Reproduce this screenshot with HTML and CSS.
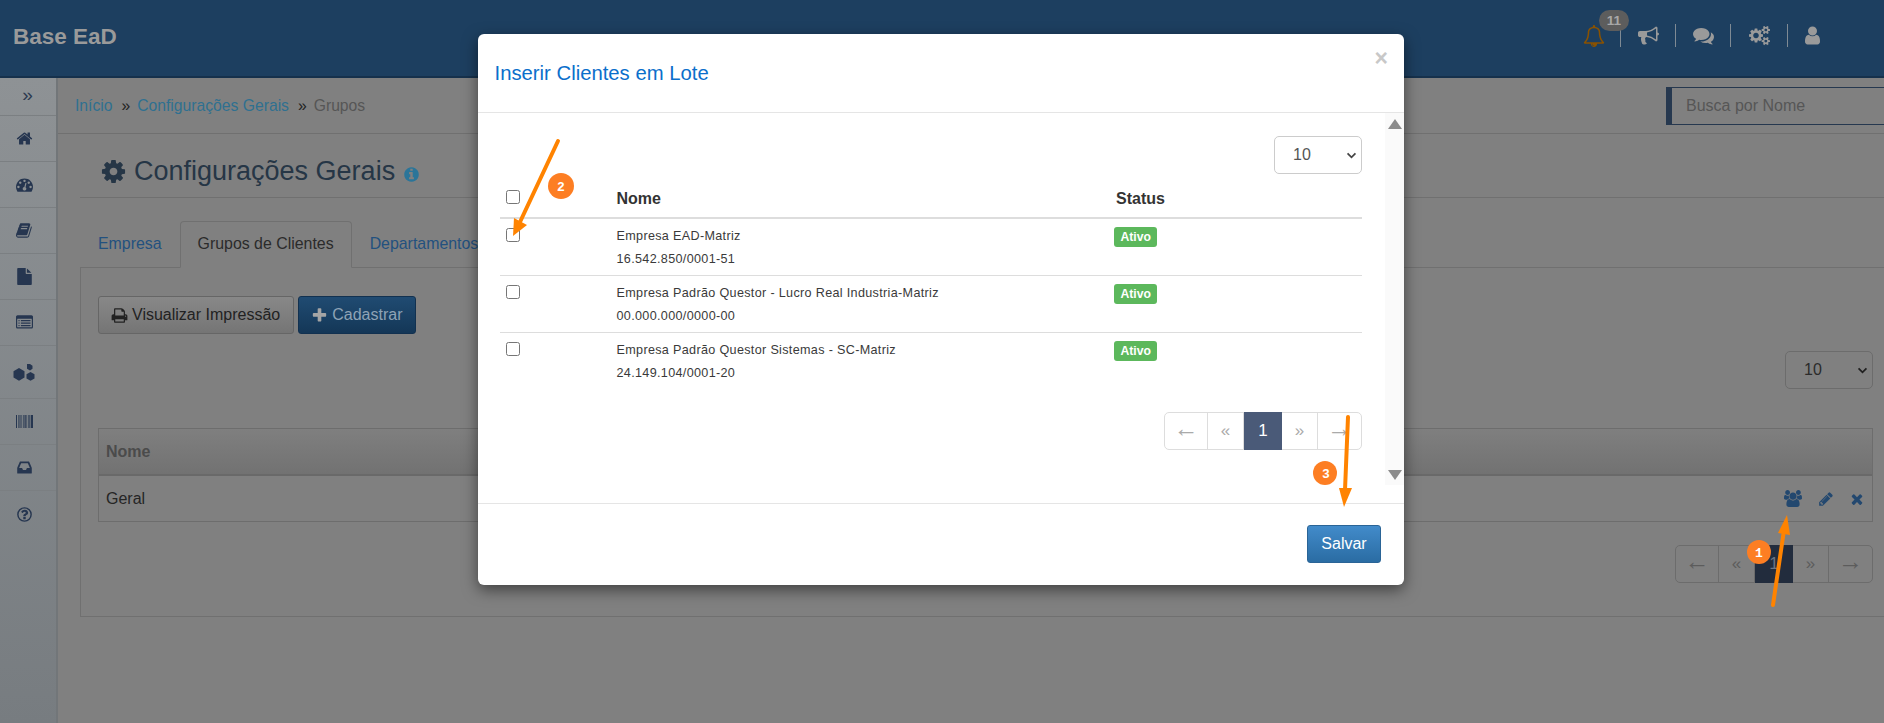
FILE: index.html
```html
<!DOCTYPE html>
<html lang="pt-BR">
<head>
<meta charset="utf-8">
<title>Grupos</title>
<link rel="stylesheet" href="styles.css">
</head>
<body>
<svg class="sprite" aria-hidden="true">
<symbol id="i-cog" viewBox="0 0 1792 1792"><path d="M1152 896q0-106-75-181t-181-75-181 75-75 181 75 181 181 75 181-75 75-181zm512-109v222q0 12-8 23t-20 13l-185 28q-19 54-39 91 35 50 107 138 10 12 10 25t-9 23q-27 37-99 108t-94 71q-12 0-26-9l-138-108q-44 23-91 38-16 136-29 186-7 28-36 28h-222q-14 0-24.5-8.5t-11.5-21.5l-28-184q-49-16-90-37l-141 107q-10 9-25 9-14 0-25-11-126-114-165-168-7-10-7-23 0-12 8-23 15-21 51-66.5t54-70.5q-27-50-41-99l-183-27q-13-2-21-12.5t-8-23.5v-222q0-12 8-23t19-13l186-28q14-46 39-92-40-57-107-138-10-12-10-24 0-10 9-23 26-36 98.5-107.5t94.5-71.5q13 0 26 10l138 107q44-23 91-38 16-136 29-186 7-28 36-28h222q14 0 24.5 8.5t11.5 21.5l28 184q49 16 90 37l142-107q9-9 24-9 13 0 25 10 129 119 165 170 7 8 7 22 0 12-8 23-15 21-51 66.5t-54 70.5q26 50 41 98l183 28q13 2 21 12.5t8 23.5z"/></symbol>
<symbol id="i-times" viewBox="0 0 1792 1792"><path d="M1490 1322q0 40-28 68l-136 136q-28 28-68 28t-68-28l-294-294-294 294q-28 28-68 28t-68-28l-136-136q-28-28-28-68t28-68l294-294-294-294q-28-28-28-68t28-68l136-136q28-28 68-28t68 28l294 294 294-294q28-28 68-28t68 28l136 136q28 28 28 68t-28 68l-294 294 294 294q28 28 28 68z"/></symbol>
<symbol id="i-plus" viewBox="0 0 1792 1792"><path d="M1600 736v192q0 40-28 68t-68 28h-416v416q0 40-28 68t-68 28h-192q-40 0-68-28t-28-68v-416h-416q-40 0-68-28t-28-68v-192q0-40 28-68t68-28h416v-416q0-40 28-68t68-28h192q40 0 68 28t28 68v416h416q40 0 68 28t28 68z"/></symbol>
<symbol id="i-user" viewBox="0 0 1792 1792"><path d="M1536 1399q0 109-62.5 187t-150.5 78h-854q-88 0-150.5-78t-62.5-187q0-85 8.5-160.5t31.5-152 58.5-131 94-89 134.5-34.5q131 128 313 128t313-128q76 0 134.5 34.5t94 89 58.5 131 31.5 152 8.5 160.5zm-256-887q0 159-112.5 271.5t-271.5 112.5-271.5-112.5-112.5-271.5 112.5-271.5 271.5-112.5 271.5 112.5 112.5 271.5z"/></symbol>
<symbol id="i-home" viewBox="0 0 1792 1792"><path d="M1472 992v480q0 26-19 45t-45 19h-384v-384h-256v384h-384q-26 0-45-19t-19-45v-480q0-1 .5-3t.5-3l575-474 575 474q1 2 1 6zm223-69l-62 74q-8 9-21 11h-3q-13 0-21-7l-692-577-692 577q-12 8-24 7-13-2-21-11l-62-74q-8-10-7-23.5t11-21.5l719-599q32-26 76-26t76 26l244 204v-195q0-14 9-23t23-9h192q14 0 23 9t9 23v408l219 182q10 8 11 21.5t-7 23.5z"/></symbol>
<symbol id="i-file" viewBox="0 0 1792 1792"><path d="M1152 512v-472q22 14 36 28l408 408q14 14 28 36h-472zm-128 32q0 40 28 68t68 28h544v1056q0 40-28 68t-68 28h-1344q-40 0-68-28t-28-68v-1600q0-40 28-68t68-28h800v544z"/></symbol>
<symbol id="i-pencil" viewBox="0 0 1792 1792"><path d="M491 1536l91-91-235-235-91 91v107h128v128h107zm523-928q0-22-22-22-10 0-17 7l-542 542q-7 7-7 17 0 22 22 22 10 0 17-7l542-542q7-7 7-17zm-54-192l416 416-832 832h-416v-416zm683 96q0 53-37 90l-166 166-416-416 166-165q36-38 90-38 53 0 91 38l235 234q37 39 37 91z"/></symbol>
<symbol id="i-users" viewBox="0 0 1920 1792"><path d="M593 896q-162 5-265 128h-134q-82 0-138-40.5t-56-118.5q0-353 124-353 6 0 43.5 21t97.5 42.5 119 21.5q67 0 133-23-5 37-5 66 0 139 81 256zm1071 637q0 120-73 189.5t-194 69.5h-874q-121 0-194-69.5t-73-189.5q0-53 3.5-103.5t14-109 26.5-108.5 43-97.5 62-81 85.5-53.5 111.5-20q10 0 43 21.5t73 48 107 48 135 21.5 135-21.5 107-48 73-48 43-21.5q61 0 111.5 20t85.5 53.5 62 81 43 97.5 26.5 108.5 14 109 3.5 103.5zm-1024-1277q0 106-75 181t-181 75-181-75-75-181 75-181 181-75 181 75 75 181zm704 384q0 159-112.5 271.5t-271.5 112.5-271.5-112.5-112.5-271.5 112.5-271.5 271.5-112.5 271.5 112.5 112.5 271.5zm576 225q0 78-56 118.5t-138 40.5h-134q-103-123-265-128 81-117 81-256 0-29-5-66 66 23 133 23 59 0 119-21.5t97.5-42.5 43.5-21q124 0 124 353zm-128-609q0 106-75 181t-181 75-181-75-75-181 75-181 181-75 181 75 75 181z"/></symbol>
<symbol id="i-info" viewBox="0 0 1792 1792"><path d="M1152 1376v-160q0-14-9-23t-23-9h-96v-512q0-14-9-23t-23-9h-320q-14 0-23 9t-9 23v160q0 14 9 23t23 9h96v320h-96q-14 0-23 9t-9 23v160q0 14 9 23t23 9h448q14 0 23-9t9-23zm-128-896v-160q0-14-9-23t-23-9h-192q-14 0-23 9t-9 23v160q0 14 9 23t23 9h192q14 0 23-9t9-23zm640 416q0 209-103 385.5t-279.5 279.5-385.5 103-385.5-103-279.5-279.5-103-385.5 103-385.5 279.5-279.5 385.5-103 385.5 103 279.5 279.5 103 385.5z"/></symbol>
<symbol id="i-print" viewBox="0 0 1792 1792"><path d="M448 1536h896v-256h-896v256zm0-640h896v-384h-160q-40 0-68-28t-28-68v-160h-640v640zm1152 64q0-26-19-45t-45-19-45 19-19 45 19 45 45 19 45-19 19-45zm128 0v416q0 13-9.5 22.5t-22.5 9.5h-224v160q0 40-28 68t-68 28h-960q-40 0-68-28t-28-68v-160h-224q-13 0-22.5-9.5t-9.5-22.5v-416q0-79 56.5-135.5t135.5-56.5h64v-544q0-40 28-68t68-28h672q40 0 88 20t76 48l152 152q28 28 48 76t20 88v256h64q79 0 135.5 56.5t56.5 135.5z"/></symbol>
<symbol id="i-comments" viewBox="0 0 1792 1792"><path d="M1408 768q0 139-94 257t-256.5 186.5-353.5 68.5q-86 0-176-16-124 88-278 128-36 9-86 16h-3q-11 0-20.5-8t-11.5-21q-1-3-1-6.5t.5-6.5 2-6l2.5-5 3.5-5.5 4-5 4.5-5 4-4.5q5-6 23-25t26-29.5 22.5-29 25-38.5 20.5-44q-124-72-195-177t-71-224q0-139 94-257t256.5-186.5 353.5-68.5 353.5 68.5 256.5 186.5 94 257zm384 256q0 120-71 224.5t-195 176.5q10 24 20.5 44t25 38.5 22.5 29 26 29.5 23 25q1 1 4 4.5t4.5 5 4 5 3.5 5.5l2.5 5 2 6 .5 6.5-1 6.5q-3 14-13 22t-22 7q-50-7-86-16-154-40-278-128-90 16-176 16-271 0-472-132 58 4 88 4 161 0 309-45t264-129q125-92 192-212t67-254q0-77-23-152 129 71 204 178t75 230z"/></symbol>
<symbol id="i-bell" viewBox="0 0 1792 1792"><path d="M912 1696q0-16-16-16-59 0-101.5-42.5t-42.5-101.5q0-16-16-16t-16 16q0 73 51.5 124.5t124.5 51.5q16 0 16-16zm-666-288h1300q-266-300-266-832 0-51-24-105t-69-103-121.5-80.5-169.5-31.5-169.5 31.5-121.5 80.5-69 103-24 105q0 532-266 832zm1482 0q0 52-38 90t-90 38h-448q0 106-75 181t-181 75-181-75-75-181h-448q-52 0-90-38t-38-90q50-42 91-88t85-119.5 74.5-158.5 50-206 19.5-260q0-152 117-282.5t307-158.5q-8-19-8-39 0-40 28-68t68-28 68 28 28 68q0 20-8 39 190 28 307 158.5t117 282.5q0 139 19.5 260t50 206 74.5 158.5 85 119.5 91 88z"/></symbol>
<symbol id="i-bullhorn" viewBox="0 0 1792 1792"><path d="M1664 640q53 0 90.5 37.5t37.5 90.5-37.5 90.5-90.5 37.5v384q0 52-38 90t-90 38q-417-347-812-380-58 19-91 66t-31 100.5 40 92.5q-20 33-23 65.5t6 58 33.5 55 48 50 61.5 50.5q-29 58-111.5 83t-168.5 11.5-132-55.5q-7-23-29.5-87.5t-32-94.5-23-89-15-101 3.5-98.5 22-110.5h-122q-66 0-113-47t-47-113v-192q0-66 47-113t113-47h480q435 0 896-384 52 0 90 38t38 90v384zm-128 604v-954q-394 302-768 343v270q377 42 768 341z"/></symbol>
<symbol id="i-cogs" viewBox="0 0 1920 1792"><path d="M896 896q0-106-75-181t-181-75-181 75-75 181 75 181 181 75 181-75 75-181zm768 512q0-52-38-90t-90-38-90 38-38 90q0 53 37.5 90.5t90.5 37.5 90.5-37.5 37.5-90.5zm0-1024q0-52-38-90t-90-38-90 38-38 90q0 53 37.5 90.5t90.5 37.5 90.5-37.5 37.5-90.5zm-384 421v185q0 10-7 19.5t-16 10.5l-155 24q-11 35-32 76 34 48 90 115 7 11 7 20 0 12-7 19-23 30-82.5 89.5t-78.5 59.5q-11 0-21-7l-115-90q-37 19-77 31-11 108-23 155-7 24-30 24h-186q-11 0-20-7.5t-10-17.5l-23-153q-34-10-75-31l-118 89q-7 7-20 7-11 0-21-8-144-133-144-160 0-9 7-19 10-14 41-53t47-61q-23-44-35-82l-152-24q-10-1-17-9.5t-7-19.5v-185q0-10 7-19.5t16-10.5l155-24q11-35 32-76-34-48-90-115-7-11-7-19 0-12 7-20 22-30 82-89t79-59q11 0 21 7l115 90q34-18 77-32 11-108 23-154 7-24 30-24h186q11 0 20 7.5t10 17.5l23 153q34 10 75 31l118-89q8-7 20-7 11 0 21 8 144 133 144 160 0 8-7 19-12 16-42 54t-45 60q23 48 34 82l152 23q10 2 17 10.5t7 19.5zm640 533v140q0 16-149 31-12 27-30 52 51 113 51 138 0 4-4 7-122 71-124 71-8 0-46-47t-52-68q-20 2-30 2t-30-2q-14 21-52 68t-46 47q-2 0-124-71-4-3-4-7 0-25 51-138-18-25-30-52-149-15-149-31v-140q0-16 149-31 13-29 30-52-51-113-51-138 0-4 4-7 4-2 35-20t59-34 30-16q8 0 46 46.5t52 67.5q20-2 30-2t30 2q51-71 92-112l6-2q4 0 124 70 4 3 4 7 0 25-51 138 17 23 30 52 149 15 149 31zm0-1024v140q0 16-149 31-12 27-30 52 51 113 51 138 0 4-4 7-122 71-124 71-8 0-46-47t-52-68q-20 2-30 2t-30-2q-14 21-52 68t-46 47q-2 0-124-71-4-3-4-7 0-25 51-138-18-25-30-52-149-15-149-31v-140q0-16 149-31 13-29 30-52-51-113-51-138 0-4 4-7 4-2 35-20t59-34 30-16q8 0 46 46.5t52 67.5q20-2 30-2t30 2q51-71 92-112l6-2q4 0 124 70 4 3 4 7 0 25-51 138 17 23 30 52 149 15 149 31z"/></symbol>
<symbol id="i-book" viewBox="0 0 1792 1792"><path d="M1639 478q40 57 18 129l-275 906q-19 64-76.5 107.5t-122.5 43.5h-923q-77 0-148.5-53.5t-99.5-131.5q-24-67-2-127 0-4 3-27t4-37q1-8-3-21.5t-3-19.5q2-11 8-21t16.5-23.5 16.5-23.5q23-38 45-91.5t30-91.5q3-10 .5-30t-.5-28q3-11 17-28t17-23q21-36 42-92t25-90q1-9-2.5-32t.5-28q4-13 22-30.5t22-22.5q19-26 42.5-84.5t27.5-96.5q1-8-3-25.5t-2-26.5q2-8 9-18t18-23 17-21q8-12 16.5-30.5t15-35 16-36 19.5-32 26.5-23.5 36-11.5 47.5 5.5l-1 3q38-9 51-9h761q74 0 114 56t18 130l-274 906q-36 119-71.5 153.5t-128.5 34.5h-869q-27 0-38 15-11 16-1 43 24 70 144 70h923q29 0 56-15.5t35-41.5l300-987q7-22 5-57 38 15 59 43zm-1064 2q-4 13 2 22.5t20 9.5h608q13 0 25.5-9.5t16.5-22.5l21-64q4-13-2-22.5t-20-9.5h-608q-13 0-25.5 9.5t-16.5 22.5zm-83 256q-4 13 2 22.5t20 9.5h608q13 0 25.5-9.5t16.5-22.5l21-64q4-13-2-22.5t-20-9.5h-608q-13 0-25.5 9.5t-16.5 22.5z"/></symbol>
<symbol id="i-dash" viewBox="0 0 1792 1792"><path d="M384 1152q0-53-37.5-90.5t-90.5-37.5-90.5 37.5-37.5 90.5 37.5 90.5 90.5 37.5 90.5-37.5 37.5-90.5zm192-448q0-53-37.5-90.5t-90.5-37.5-90.5 37.5-37.5 90.5 37.5 90.5 90.5 37.5 90.5-37.5 37.5-90.5zm428 481l101-382q6-26-7.5-48.5t-38.5-29.5-48 6.5-30 39.5l-101 382q-60 5-107 43.5t-63 98.5q-20 77 20 146t117 89 146-20 89-117q16-60-6-117t-72-91zm660-33q0-53-37.5-90.5t-90.5-37.5-90.5 37.5-37.5 90.5 37.5 90.5 90.5 37.5 90.5-37.5 37.5-90.5zm-640-640q0-53-37.5-90.5t-90.5-37.5-90.5 37.5-37.5 90.5 37.5 90.5 90.5 37.5 90.5-37.5 37.5-90.5zm448 192q0-53-37.5-90.5t-90.5-37.5-90.5 37.5-37.5 90.5 37.5 90.5 90.5 37.5 90.5-37.5 37.5-90.5zm320 448q0 261-141 483-19 29-54 29h-1402q-35 0-54-29-141-221-141-483 0-182 71-348t191-286 286-191 348-71 348 71 286 191 191 286 71 348z"/></symbol>
<symbol id="i-list" viewBox="0 0 1792 1792"><path d="M384 1184v64q0 13-9.5 22.5t-22.5 9.5h-64q-13 0-22.5-9.5t-9.5-22.5v-64q0-13 9.5-22.5t22.5-9.5h64q13 0 22.5 9.5t9.5 22.5zm0-256v64q0 13-9.5 22.5t-22.5 9.5h-64q-13 0-22.5-9.5t-9.5-22.5v-64q0-13 9.5-22.5t22.5-9.5h64q13 0 22.5 9.5t9.5 22.5zm0-256v64q0 13-9.5 22.5t-22.5 9.5h-64q-13 0-22.5-9.5t-9.5-22.5v-64q0-13 9.5-22.5t22.5-9.5h64q13 0 22.5 9.5t9.5 22.5zm1152 512v64q0 13-9.5 22.5t-22.5 9.5h-960q-13 0-22.5-9.5t-9.5-22.5v-64q0-13 9.5-22.5t22.5-9.5h960q13 0 22.5 9.5t9.5 22.5zm0-256v64q0 13-9.5 22.5t-22.5 9.5h-960q-13 0-22.5-9.5t-9.5-22.5v-64q0-13 9.5-22.5t22.5-9.5h960q13 0 22.5 9.5t9.5 22.5zm0-256v64q0 13-9.5 22.5t-22.5 9.5h-960q-13 0-22.5-9.5t-9.5-22.5v-64q0-13 9.5-22.5t22.5-9.5h960q13 0 22.5 9.5t9.5 22.5zm128 704v-832q0-13-9.5-22.5t-22.5-9.5h-1472q-13 0-22.5 9.5t-9.5 22.5v832q0 13 9.5 22.5t22.5 9.5h1472q13 0 22.5-9.5t9.5-22.5zm128-1088v1088q0 66-47 113t-113 47h-1472q-66 0-113-47t-47-113v-1088q0-66 47-113t113-47h1472q66 0 113 47t47 113z"/></symbol>
<symbol id="i-hex" viewBox="0 0 24 18"><path d="M7 5l5.5 3.2v6.3L7 17.700l-5.500-3.200V8.200zM15 1l3-.1 2.500 1.800v3L18 7.500l-3-1.700v-3.100zM18.500 9l4 2.300v4.200l-4 2.300-4-2.300v-4.200z"/></symbol>
<symbol id="i-barcode" viewBox="0 0 17 13"><path d="M0 0h1v13H0zM2 0h.6v13H2zM3.500 0h1v13h-1zM5.500 0h.6v13h-.6zM7 0h.6v13H7zM8.500 0h1.200v13H8.500zM10.500 0h.6v13h-.6zM12 0h.6v13H12zM13.300 0h.6v13h-.6zM14.700 0H17v13h-2.300z"/></symbol>
<symbol id="i-inbox" viewBox="0 0 1792 1792"><path d="M1151 960h316q-1-3-2.500-8.500t-2.500-7.500l-212-496h-708l-212 496q-1 3-2.500 8.500t-2.500 7.500h316l95 192h320zm513 30v482q0 26-19 45t-45 19h-1408q-26 0-45-19t-19-45v-482q0-62 25-123l238-552q10-25 36.500-42t52.500-17h832q26 0 52.500 17t36.500 42l238 552q25 61 25 123z"/></symbol>
<symbol id="i-help" viewBox="0 0 1792 1792"><circle cx="896" cy="896" r="700" fill="none" stroke="currentColor" stroke-width="150"/><path d="M1024 1376v-192q0-14-9-23t-23-9h-192q-14 0-23 9t-9 23v192q0 14 9 23t23 9h192q14 0 23-9t9-23zm256-672q0-88-55.500-163t-138.500-116-170-41q-243 0-371 213-15 24 8 42l132 100q7 6 19 6 16 0 25-12 53-68 86-92 34-24 86-24 48 0 85.500 26t37.500 59q0 38-20 61t-68 45q-63 28-115.500 86.500t-52.500 125.500v36q0 14 9 23t23 9h192q14 0 23-9t9-23q0-19 21.500-49.500t54.500-49.500q32-18 49-28.500t46-35 44.500-48 28-60.500 12.500-81z"/></symbol>
</svg>

<header class="topbar">
  <span class="brand">Base EaD</span>
  <nav class="topnav">
    <a class="topnav-item bell"><svg class="ic ic-bell"><use href="#i-bell"/></svg><span class="count">11</span></a>
    <a class="topnav-item"><svg class="ic ic-top"><use href="#i-bullhorn"/></svg></a>
    <a class="topnav-item"><svg class="ic ic-top"><use href="#i-comments"/></svg></a>
    <a class="topnav-item wider"><svg class="ic ic-top"><use href="#i-cogs"/></svg></a>
    <a class="topnav-item last"><svg class="ic ic-top"><use href="#i-user"/></svg></a>
  </nav>
</header>

<div class="shell">
  <aside class="sidebar">
    <div class="side-toggle">»</div>
    <div class="side-item"><svg class="ic ic-side"><use href="#i-home"/></svg></div>
    <div class="side-item"><svg class="ic ic-side"><use href="#i-dash"/></svg></div>
    <div class="side-item"><svg class="ic ic-side"><use href="#i-book"/></svg></div>
    <div class="side-item"><svg class="ic ic-side"><use href="#i-file"/></svg></div>
    <div class="side-item"><svg class="ic ic-side"><use href="#i-list"/></svg></div>
    <div class="side-item tall"><svg class="ic ic-hex"><use href="#i-hex"/></svg></div>
    <div class="side-item"><svg class="ic ic-barcode"><use href="#i-barcode"/></svg></div>
    <div class="side-item"><svg class="ic ic-side"><use href="#i-inbox"/></svg></div>
    <div class="side-item none"><svg class="ic ic-side"><use href="#i-help"/></svg></div>
  </aside>

  <main class="main">
    <div class="crumbbar">
      <div class="crumbs"><a>Início</a><b>»</b><a>Configurações Gerais</a><b>»</b><span>Grupos</span></div>
      <div class="search">Busca por Nome</div>
    </div>
    <div class="content">
      <h1 class="page-title"><svg class="ic ic-title"><use href="#i-cog"/></svg>Configurações Gerais<svg class="ic ic-info"><use href="#i-info"/></svg></h1>
      <ul class="tabs">
        <li class="tab">Empresa</li>
        <li class="tab active">Grupos de Clientes</li>
        <li class="tab">Departamentos</li>
      </ul>
      <section class="panel">
        <div class="toolbar">
          <button class="btn btn-default"><svg class="ic ic-btn"><use href="#i-print"/></svg>Visualizar Impressão</button>
          <button class="btn btn-primary"><svg class="ic ic-btn ic-plus"><use href="#i-plus"/></svg>Cadastrar</button>
        </div>
        <div class="size-row"><div class="size-select"><span>10</span><svg class="chev" viewBox="0 0 12 8"><path d="M1.500 1.500L6 6l4.500-4.500" fill="none" stroke="currentColor" stroke-width="2"/></svg></div></div>
        <div class="grid">
          <div class="grid-head">Nome</div>
          <div class="grid-row"><span>Geral</span>
            <span class="actions">
              <svg class="ic ic-users"><use href="#i-users"/></svg>
              <svg class="ic ic-act"><use href="#i-pencil"/></svg>
              <svg class="ic ic-act"><use href="#i-times"/></svg>
            </span>
          </div>
        </div>
        <div class="pager-row">
          <div class="pager"><a class="wide">←</a><a>«</a><a class="on">1</a><a>»</a><a class="wide">→</a></div>
        </div>
      </section>
    </div>
  </main>
</div>

<div class="modal">
  <div class="modal-head">
    <h2>Inserir Clientes em Lote</h2>
    <span class="close">×</span>
  </div>
  <div class="modal-body">
    <div class="modal-scroll">
      <div class="size-row m"><div class="size-select"><span>10</span><svg class="chev" viewBox="0 0 12 8"><path d="M1.500 1.500L6 6l4.500-4.500" fill="none" stroke="currentColor" stroke-width="2"/></svg></div></div>
      <table class="clients">
        <thead><tr><th class="c1"><input type="checkbox"></th><th class="c2">Nome</th><th class="c3">Status</th></tr></thead>
        <tbody>
          <tr><td class="c1"><input type="checkbox"></td><td>Empresa EAD-Matriz<br>16.542.850/0001-51</td><td><span class="label">Ativo</span></td></tr>
          <tr><td class="c1"><input type="checkbox"></td><td>Empresa Padrão Questor - Lucro Real Industria-Matriz<br>00.000.000/0000-00</td><td><span class="label">Ativo</span></td></tr>
          <tr><td class="c1"><input type="checkbox"></td><td>Empresa Padrão Questor Sistemas - SC-Matriz<br>24.149.104/0001-20</td><td><span class="label">Ativo</span></td></tr>
        </tbody>
      </table>
      <div class="pager-row m">
        <div class="pager light"><a class="wide">←</a><a>«</a><a class="on">1</a><a>»</a><a class="wide">→</a></div>
      </div>
    </div>
    <div class="scrollbar"><i class="tri up"></i><i class="tri down"></i></div>
  </div>
  <div class="modal-foot"><button class="btn btn-save">Salvar</button></div>
</div>

<svg class="notes" viewBox="0 0 1884 723">
  <g class="note-line">
    <path d="M1773 605L1784 530"/>
    <path d="M558 141L520 222"/>
    <path d="M1348 417L1345 490"/>
  </g>
  <g class="note-head">
    <path d="M1787 515L1790 535L1778 533z"/>
    <path d="M513 236L514 218L527 225z"/>
    <path d="M1344 507L1339 488L1352 488z"/>
  </g>
  <g class="note-dot">
    <circle cx="1759" cy="552" r="12"/>
    <circle cx="561" cy="186" r="13"/>
    <circle cx="1325" cy="473" r="12"/>
  </g>
  <g class="note-num">
    <text x="1759" y="557">1</text>
    <text x="561" y="191">2</text>
    <text x="1326" y="478">3</text>
  </g>
</svg>
</body>
</html>
```
FILE: styles.css
```css
* { box-sizing: border-box; }
html, body { margin: 0; height: 100%; overflow: hidden; }
body { position: relative; width: 1884px; height: 723px; background: #808080; font-family: "Liberation Sans", Arial, sans-serif; font-size: 16px; color: #222; }
.sprite { display: none; }
.ic { display: block; fill: currentColor; flex: none; }

.topbar { height: 78px; background: #1d3f60; border-bottom: 2px solid #16314c; display: flex; align-items: center; justify-content: space-between; padding: 0 0 0 13px; }
.brand { font-size: 22.500px; font-weight: 700; color: #9a9a9a; position: relative; top: -1px; }
.topnav { display: flex; align-items: center; margin-right: 48px; margin-top: -5px; }
.topnav-item { width: 55px; height: 23px; border-right: 1px solid #7f8a94; display: flex; align-items: center; justify-content: center; color: #9a9a9a; position: relative; }
.topnav-item.wider { width: 57px; }
.topnav-item.last { width: 48px; border-right: 0; }
.bell { color: #8a5200; justify-content: flex-start; padding-left: 17px; }
.ic-bell { width: 22px; height: 22px; }
.ic-top { width: 21px; height: 21px; }
.count { position: absolute; left: 33px; top: -14px; width: 30px; height: 21px; border-radius: 11px; background: #5d5d5d; color: #a8a8a8; font-size: 13.500px; font-weight: 700; text-align: center; line-height: 21px; }

.shell { display: flex; height: 645px; }
.sidebar { width: 58px; flex: none; border-right: 2px solid #727679; background: linear-gradient(#8e9295, #777c80); color: #263650; }
.side-toggle { height: 38px; border-bottom: 1px solid #7b7f82; text-align: center; font-size: 19px; line-height: 34px; color: #2c3a50; padding-right: 1px; }
.side-item { height: 46px; border-bottom: 1px solid #7b7f82; display: flex; align-items: center; justify-content: center; padding-right: 8px; }
.side-item.tall { height: 53px; }
.side-item.none { border-bottom: 0; }
.ic-side { width: 17px; height: 17px; }
.ic-hex { width: 24px; height: 18px; }
.ic-barcode { width: 17px; height: 13px; }

.main { flex: 1; min-width: 0; padding-right: 0; }
.crumbbar { height: 56px; border-bottom: 1px solid #707070; display: flex; align-items: center; justify-content: space-between; padding-left: 17px; }
.crumbs { display: flex; font-size: 15.700px; color: #565656; }
.crumbs a { color: #2f7090; }
.crumbs b { font-weight: 400; color: #1f1f1f; margin: 0 7px 0 9px; }
.search { width: 218px; height: 38px; background: #808080; border: 1px solid #26384f; border-left-width: 6px; border-right: 0; padding-left: 14px; font-size: 16px; line-height: 36px; color: #565656; }

.content { padding-left: 22px; }
.page-title { margin: 0; height: 64px; border-bottom: 1px solid #707070; display: flex; align-items: center; padding: 12px 0 0 20px; font-size: 27px; font-weight: 400; color: #263646; }
.ic-title { width: 27px; height: 27px; margin-right: 7px; }
.ic-info { width: 17px; height: 17px; color: #2b7599; margin: 5px 0 0 8px; }

.tabs { list-style: none; margin: 23px 0 0; padding: 0; display: flex; height: 46px; position: relative; z-index: 1; font-size: 15.900px; }
.tab { padding: 0 17px; line-height: 44px; color: #23517f; border: 1px solid transparent; }
.tab.active { height: 47px; border-color: #707070; border-bottom-color: #808080; border-radius: 4px 4px 0 0; color: #2b2b2b; background: #808080; }
.panel { height: 350px; border: 1px solid #707070; border-right: 0; padding: 28px 11px 0 17px; }

.toolbar { display: flex; gap: 4px; }
.btn { font-family: inherit; font-size: 16px; height: 38px; border-radius: 3px; display: inline-flex; align-items: center; padding: 0 13px 0 12px; border: 1px solid; }
.btn-default { background: linear-gradient(#888, #757575); border-color: #666; color: #222; }
.btn-primary { background: linear-gradient(#204b72, #143757); border-color: #123150; color: #8ea3b6; }
.ic-btn { width: 17px; height: 17px; margin-right: 4px; }
.ic-plus { color: #a5a5a5; }
.btn-save { background: linear-gradient(#428bca, #2a6ca3); border-color: #2a6496; color: #fff; width: 74px; justify-content: center; padding: 0; }

.size-row { display: flex; justify-content: flex-end; margin-top: 17px; }
.size-select { width: 88px; height: 38px; border: 1px solid #6c6c6c; border-radius: 5px; display: flex; align-items: center; justify-content: space-between; padding: 0 4px 0 18px; font-size: 16px; color: #2b2b2b; }
.chev { width: 11px; height: 7px; color: #1f1f1f; }

.grid { margin-top: 39px; border: 1px solid #6d6d6d; }
.grid-head { height: 47px; background: linear-gradient(#7f7f7f, #727272); border-bottom: 2px solid #696969; padding-left: 7px; font-weight: 700; line-height: 45px; color: #4b4b4b; }
.grid-row { height: 45px; display: flex; align-items: center; justify-content: space-between; padding: 0 7px 0 7px; color: #252525; }
.actions { display: flex; align-items: center; gap: 15.500px; color: #23486f; }
.ic-users { width: 18px; height: 17px; }
.ic-act { width: 16px; height: 16px; }

.pager-row { display: flex; justify-content: flex-end; margin-top: 23px; }
.pager { display: flex; height: 38px; border: 1px solid #6c6c6c; border-radius: 5px; color: #5c5c5c; }
.pager a { width: 36px; display: flex; align-items: center; justify-content: center; border-right: 1px solid #6c6c6c; font-size: 17px; }
.pager a.wide { width: 43px; font-size: 25px; font-weight: 400; padding-bottom: 5px; }
.pager a:last-child { border-right: 0; }
.pager a.on { width: 38px; background: #222c3d; color: #6b7484; margin: -1px 0; height: 38px; border: 0; }

.modal { position: absolute; left: 478px; top: 34px; width: 926px; height: 551px; background: #fff; border-radius: 6px; box-shadow: 0 5px 15px rgba(0,0,0,.5); z-index: 5; color: #333; }
.modal-head { height: 79px; border-bottom: 1px solid #e5e5e5; position: relative; padding: 27px 0 0 16.500px; }
.modal-head h2 { margin: 0; font-size: 20.300px; font-weight: 400; color: #0b6fcb; line-height: 24px; }
.close { position: absolute; right: 16px; top: 10px; font-size: 23px; font-weight: 700; line-height: 28px; color: #c8c8c8; }
.modal-body { height: 390px; display: flex; align-items: flex-start; }
.modal-scroll { flex: 1; padding: 0 23px 0 22px; }
.size-row.m { margin-top: 23px; }
.size-row.m .size-select { border-color: #ccc; color: #555; }
.size-row.m .chev { color: #444; }
.scrollbar { width: 19px; height: 372px; background: #fafafa; display: flex; flex-direction: column; justify-content: space-between; align-items: center; padding: 6px 0 5px; }
.tri { width: 0; height: 0; border-left: 7px solid transparent; border-right: 7px solid transparent; }
.tri.up { border-bottom: 10px solid #8c8c8c; }
.tri.down { border-top: 10px solid #8c8c8c; }

.clients { width: 100%; margin-top: 0; border-collapse: collapse; table-layout: fixed; font-size: 12.600px; color: #3a3a3a; }
.clients th { height: 44px; padding: 7px 0 0 0; text-align: left; font-size: 16px; font-weight: 700; color: #333; border-bottom: 2px solid #ddd; }
.clients td { height: 57px; padding: 6px 0 0 0; vertical-align: top; line-height: 23px; letter-spacing: .33px; border-bottom: 1px solid #ddd; }
.clients tr:last-child td { border-bottom: 0; }
.clients .c1 { width: 116.500px; padding-left: 6px; }
.clients .c2 { width: 497.500px; }
.clients th.c3 { padding-left: 2px; }
.clients input { display: block; margin: 0; width: 14px; height: 14px; }
.clients th input { margin-top: -4px; }
.clients td input { margin-top: 3px; }
.label { display: inline-block; background: #5cb85c; color: #fff; font-size: 12.200px; font-weight: 700; letter-spacing: 0; line-height: 20px; height: 20px; padding: 0 6.500px; border-radius: 3px; margin-top: 2px; }
.pager-row.m { margin-top: 23px; }
.pager.light { border-color: #ddd; color: #aaa; }
.pager.light a { border-color: #ddd; }
.pager.light a.on { background: #4a5a78; color: #fff; }

.modal-foot { border-top: 1px solid #e5e5e5; height: 82px; padding: 21px 23px 0 0; display: flex; justify-content: flex-end; }

.notes { position: absolute; left: 0; top: 0; width: 1884px; height: 723px; z-index: 9; pointer-events: none; }
.note-line path { stroke: #ff8300; stroke-width: 4; stroke-linecap: round; fill: none; }
.note-head path { fill: #ff8300; }
.note-dot circle { fill: #fd7e23; }
.note-num text { fill: #fff; font: 700 13px "Liberation Mono", monospace; text-anchor: middle; }
```
